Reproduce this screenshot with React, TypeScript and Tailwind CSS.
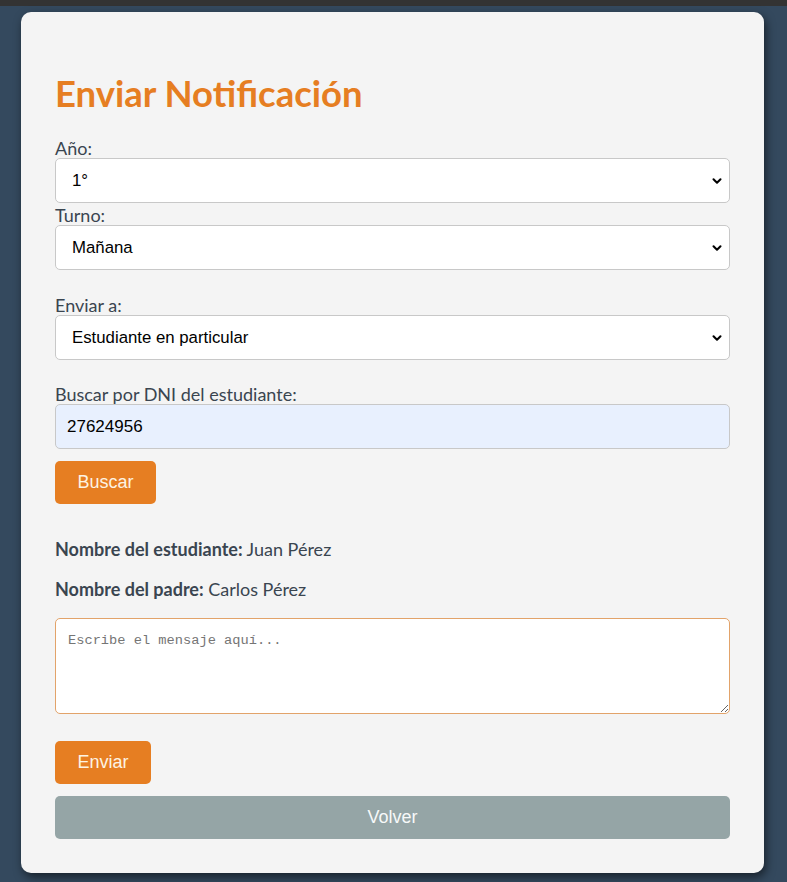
import { ChevronDown } from 'lucide-react';

const lato = { fontFamily: 'Lato, "Open Sans", sans-serif' };

function SelectField({ value, options }: { value: string; options: string[] }) {
  return (
    <div className="relative">
      <select
        defaultValue={value}
        className="w-full h-[45px] appearance-none bg-white border border-[#c8c8c8] rounded-[5px] pl-4 pr-10 text-[16.8px] text-black font-['Liberation_Sans',Arial,sans-serif] outline-none"
      >
        {options.map((o) => (
          <option key={o}>{o}</option>
        ))}
      </select>
      <ChevronDown
        className="absolute right-[6px] top-1/2 -translate-y-1/2 w-[14px] h-[14px] text-black pointer-events-none"
        strokeWidth={3.5}
      />
    </div>
  );
}

export default function App() {
  return (
    <div className="min-h-screen bg-[#34495e] border-t-[6px] border-[#333333] pt-[6px] pb-[9px]">
      <div
        className="mx-[21px] w-[743px] bg-[#f4f4f4] rounded-[10px] px-[34px] pt-[63px] pb-[34px] shadow-[2px_4px_10px_rgba(0,0,0,0.55)] text-[#3a4550]"
        style={lato}
      >
        {/* Title */}
        <h2 className="text-[36.5px] leading-[36px] font-bold text-[#e67e22] mb-[27px]">Enviar Notificación</h2>

        <label className="block text-[18px] leading-[20px]">Año:</label>
        <SelectField value="1°" options={['1°', '2°', '3°', '4°', '5°']} />

        <label className="block text-[18px] leading-[20px] mt-[2px]">Turno:</label>
        <SelectField value="Mañana" options={['Mañana', 'Tarde', 'Noche']} />

        <label className="block text-[18px] leading-[20px] mt-[25px]">Enviar a:</label>
        <SelectField
          value="Estudiante en particular"
          options={['Estudiante en particular', 'Todo el curso']}
        />

        <label className="block text-[18px] leading-[20px] mt-[24px]">Buscar por DNI del estudiante:</label>
        <input
          defaultValue="27624956"
          className="block w-full h-[45px] bg-[#e8f0fe] border border-[#c8c8c8] rounded-[5px] px-[11px] text-[17px] text-black font-['Liberation_Sans',Arial,sans-serif] outline-none"
        />

        <button className="mt-[12px] h-[43px] w-[101px] bg-[#e67e22] text-[#fdf3e3] rounded-[5px] text-[18px] font-['Liberation_Sans',Arial,sans-serif]">
          Buscar
        </button>

        {/* Student info */}
        <p className="mt-[35px] text-[18px] leading-[20px]">
          <strong className="font-bold">Nombre del estudiante:</strong> Juan Pérez
        </p>
        <p className="mt-[20px] text-[18px] leading-[20px]">
          <strong className="font-bold">Nombre del padre:</strong> Carlos Pérez
        </p>

        <textarea
          placeholder="Escribe el mensaje aquí..."
          className="block mt-[19px] w-full h-[96px] bg-white border border-[#e2a36a] rounded-[5px] px-[12px] py-[12px] text-[13.7px] font-['Liberation_Mono',monospace] placeholder:text-[#757575] outline-none"
        />

        <button className="mt-[27px] h-[43px] w-[96px] bg-[#e67e22] text-[#fdf3e3] rounded-[5px] text-[18px] font-['Liberation_Sans',Arial,sans-serif]">
          Enviar
        </button>

        <button className="block mt-[12px] w-full h-[43px] bg-[#95a5a6] text-[#f7f9f9] rounded-[5px] text-[18px] font-['Liberation_Sans',Arial,sans-serif]">
          Volver
        </button>
      </div>
    </div>
  );
}
